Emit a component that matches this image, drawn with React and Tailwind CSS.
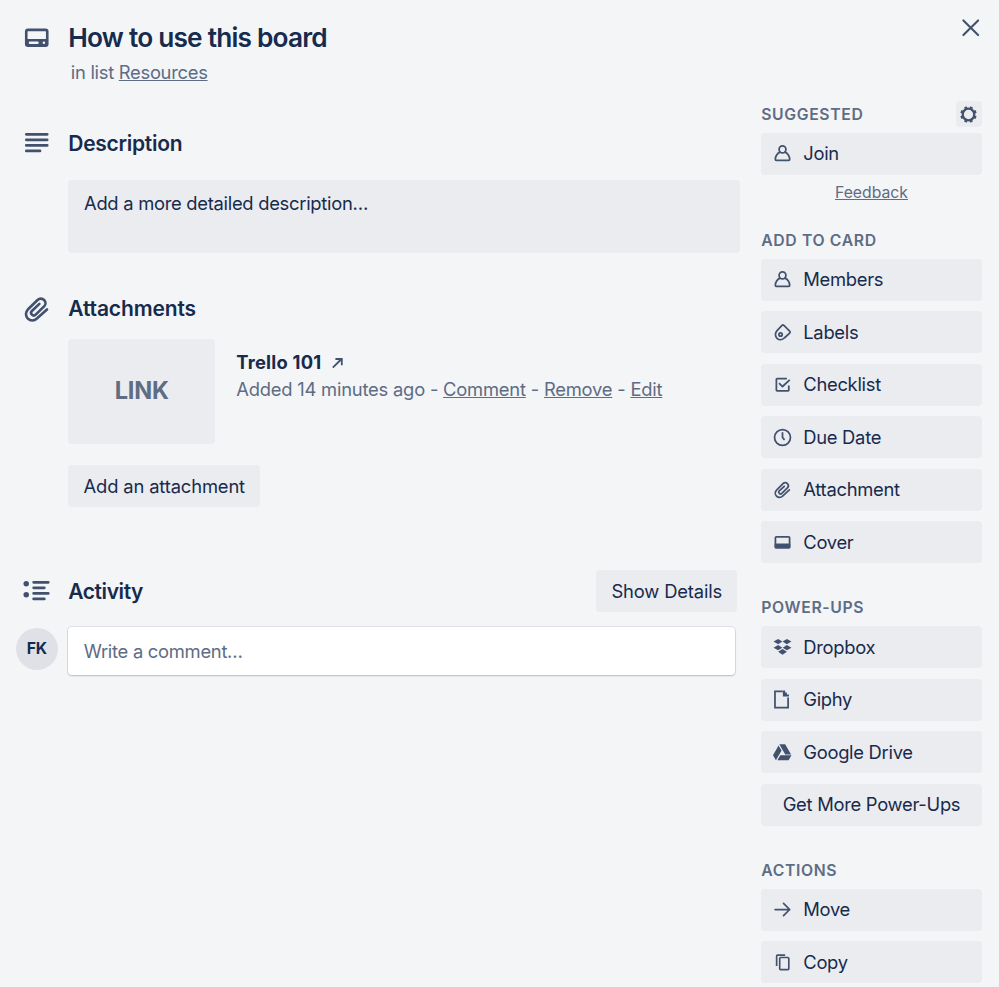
import { FaGoogleDrive } from "react-icons/fa";

const stroke = {
  fill: "none",
  stroke: "currentColor",
  strokeWidth: 2,
  strokeLinecap: "round",
  strokeLinejoin: "round",
};

function Icon({ size = 21, children, ...rest }) {
  return (
    <svg width={size} height={size} viewBox="0 0 24 24" className="shrink-0 text-[#42526e]" {...stroke} {...rest}>
      {children}
    </svg>
  );
}

const Person = () => (
  <Icon>
    <circle cx="12" cy="7.3" r="3.9" />
    <path d="M9.2 10.4C6.2 11.8 4 14.8 3.8 18.7c0 .7.4 1.1 1 1.1h14.4c.6 0 1-.4 1-1.1-.2-3.9-2.4-6.9-5.4-8.3" />
  </Icon>
);
const Tag = () => (
  <Icon>
    <path d="M11.4 3.9a1.6 1.6 0 0 1 2.2 0l6.6 6.5a1.5 1.5 0 0 1 0 2.2L14.4 18C11.8 20.6 8.2 20.9 5.8 18.7 3.3 16.3 3.3 12.4 5.8 9.8Z" />
    <circle cx="9.8" cy="14.2" r="1.9" />
  </Icon>
);
const Check = () => (
  <Icon strokeLinecap="butt">
    <path d="M17 5.2H5.8a.8.8 0 0 0-.8.8v12.4c0 .5.3.8.8.8h12.6c.5 0 .8-.3.8-.8v-5.2" />
    <path d="m8 10.3 4 4 8.3-7.7" />
  </Icon>
);
const Clock = () => (
  <Icon>
    <circle cx="12" cy="12" r="9.1" />
    <path d="M12 6.6V12l1.8 2.2" />
  </Icon>
);
const Clip = ({ size }) => (
  <Icon size={size}>
    <path d="m19.8 12.5-7.7 7c-2 1.9-5 1.9-6.9 0-1.9-1.9-1.9-4.9 0-6.9l7.4-7.3c1.4-1.4 3.6-1.4 5 0 1.4 1.4 1.4 3.5 0 4.9l-6.4 6.3c-.8.8-2.1.8-2.9 0-.8-.8-.8-2 0-2.8L14 8.3" />
  </Icon>
);
const Cover = () => (
  <Icon>
    <rect x="3.9" y="5.7" width="16.2" height="12.2" rx="1" />
    <path d="M4 14h16v3.8H4Z" fill="currentColor" />
  </Icon>
);
const Dropbox = () => (
  <Icon fill="currentColor" stroke="none">
    <path d="m7 2.2 4.9 3-4.9 3-5.2-3Zm10 0 5.2 3-5.2 3-4.9-3ZM7 9.2l4.8 3-4.8 3-5.2-3Zm10 0 5.2 3-5.2 3-4.8-3ZM12 13.8l5 3-5 3.4-5-3.4Z" />
  </Icon>
);
const Page = () => (
  <Icon strokeLinecap="butt" strokeLinejoin="miter">
    <path d="M12.2 2.7H3.4v18.7h15V9.8" />
    <path d="M12.4 1.8v6.8h7V6.3H17V4.1h-2V1.8Z" fill="currentColor" stroke="none" />
  </Icon>
);
const Drive = () => (
  <span className="flex w-[21px] shrink-0 justify-center text-[#42526e]">
    <FaGoogleDrive size={18.5} />
  </span>
);
const Arrow = () => (
  <Icon>
    <path d="M3.6 12h16.6M13.2 5l7 7-7 7" />
  </Icon>
);
const Copy = () => (
  <Icon strokeWidth="1.9">
    <rect x="8.8" y="6.3" width="10.4" height="13.8" rx="1" />
    <path d="M5.3 16V4.6c0-.6.4-1 1-1H15" strokeLinecap="butt" />
  </Icon>
);
const Gear = () => (
  <Icon strokeLinecap="butt" strokeWidth="2.6">
    <circle cx="12" cy="12" r="6.6" />
    {[22.5, 67.5, 112.5, 157.5, 202.5, 247.5, 292.5, 337.5].map((a) => (
      <path key={a} d="M12 2.6v3" strokeWidth="3.2" transform={`rotate(${a} 12 12)`} />
    ))}
  </Icon>
);

function Heading({ children, action }) {
  return (
    <div className="mb-[5.25px] flex h-[26.25px] items-center justify-between">
      <h3 className="pt-px text-[15.75px] font-semibold tracking-[0.04em] text-[#5e6c84]">{children}</h3>
      {action}
    </div>
  );
}

function SideButton({ icon: I, children }) {
  return (
    <button className="flex h-[42px] w-full items-center gap-[10.5px] rounded-[4px] bg-[#ebecf0] pl-[10.5px] text-left">
      <I />
      <span>{children}</span>
    </button>
  );
}

const Buttons = ({ children }) => <div className="flex flex-col gap-[10.5px]">{children}</div>;

const Section = ({ icon, children, className = "" }) => (
  <div className={`flex items-center ${className}`}>
    <div className="-mt-px flex w-[47.5px] shrink-0">{icon}</div>
    {children}
  </div>
);

export default function App() {
  return (
    <div className="flex h-[987px] w-[999px] overflow-hidden bg-[#f4f5f7] font-['Inter','Liberation_Sans',sans-serif] text-[18.375px] leading-[26.25px] tracking-[-0.015em] text-[#172b4d]">
      <main className="w-[740.25px] shrink-0 pl-[20.75px]">
        <Section
          className="mt-[22px] h-[32px]"
          icon={
            <Icon size={31.5}>
              <rect x="4" y="6" width="16" height="12" rx="1.3" />
              <path d="M4 13.4h16v4.4H4Z" fill="currentColor" strokeWidth="1" />
              <path d="M6.8 15.8h5.8M17.4 15.8h.1" stroke="#f4f5f7" strokeWidth="1.8" />
            </Icon>
          }
        >
          <h1 className="pt-px text-[26.25px] font-semibold tracking-[-0.03em]">How to use this board</h1>
        </Section>
        <p className="mt-[5px] pl-[50px] text-[#5e6c84]">
          in list <span className="underline">Resources</span>
        </p>

        <Section
          className="mt-[42px] h-[32px]"
          icon={
            <Icon size={31.5}>
              <path d="M4 5.6h16M4 9.8h16M4 14h16M4 18.2h10.5" />
            </Icon>
          }
        >
          <h2 className="pt-[2px] text-[21px] font-semibold tracking-[-0.013em]">Description</h2>
        </Section>
        <div className="mt-[20.5px] ml-[47.5px] h-[73px] rounded-[4px] bg-[#ebecf0] px-[15.75px] pt-[10.5px]">
          Add a more detailed description…
        </div>

        <Section className="mt-[40px] h-[32px]" icon={<Clip size={31.5} />}>
          <h2 className="pt-px text-[21px] font-semibold tracking-[-0.006em]">Attachments</h2>
        </Section>
        <div className="mt-[14px] ml-[47.5px] flex">
          <div className="flex h-[105px] w-[147px] items-center justify-center rounded-[4px] bg-[#ebecf0] text-[23.6px] font-bold tracking-[-0.008em] text-[#5e6c84]">
            LINK
          </div>
          <div className="ml-[21px] pt-[10.5px]">
            <p className="flex items-center gap-[10px] font-bold tracking-[0.012em]">
              Trello 101
              <svg width="14" height="14" viewBox="0 0 14 14" fill="none" stroke="#42526e" strokeWidth="1.8" className="mt-[2px]">
                <path d="M1.8 11.7 10 3.5M4.4 3h6.4v6.2" />
              </svg>
            </p>
            <p className="whitespace-nowrap text-[#5e6c84] tracking-[-0.0115em]">
              Added 14 minutes ago - <span className="underline">Comment</span> -{" "}
              <span className="underline">Remove</span> - <span className="underline">Edit</span>
            </p>
          </div>
        </div>
        <button className="mt-[21px] ml-[47.5px] flex h-[42px] w-[192px] items-center justify-center rounded-[4px] bg-[#ebecf0] tracking-[-0.008em] whitespace-nowrap">
          Add an attachment
        </button>

        <Section
          className="mt-[63px] h-[42px]"
          icon={
            <Icon size={31.5}>
              <path d="M9.6 5.6h11.2M9.6 9.8h8.2M9.6 14h11.2M9.6 18.2h8.2" />
              <g fill="currentColor" stroke="none">
                <circle cx="4" cy="6.7" r="2.1" />
                <circle cx="4" cy="15" r="2.1" />
              </g>
            </Icon>
          }
        >
          <h2 className="pt-[2px] text-[21px] font-semibold tracking-[-0.02em]">Activity</h2>
          <button className="mr-[3px] ml-auto flex h-[42px] w-[141px] items-center justify-center rounded-[4px] bg-[#ebecf0] tracking-[-0.008em]">
            Show Details
          </button>
        </Section>
        <div className="mt-[15px] -ml-[5px] flex">
          <div className="mt-px flex size-[42px] shrink-0 items-center justify-center rounded-full bg-[#dfe1e6] text-[15.75px] font-bold">
            FK
          </div>
          <div className="ml-[10px] flex h-[48px] w-[667.5px] items-center rounded-[4px] bg-white pl-[16px] text-[#5e6c84] shadow-[0_1px_2px_rgba(9,30,66,0.2),0_0_0_1px_rgba(9,30,66,0.08)]">
            Write a comment…
          </div>
        </div>
      </main>

      <aside className="ml-[21px] w-[220.5px] shrink-0">
        <div className="-mr-[5px] flex h-[101px] justify-end pt-[12px]">
          <Icon size={31.5} strokeWidth="1.6">
            <path d="m6.4 6.4 11.2 11.2M17.6 6.4 6.4 17.6" />
          </Icon>
        </div>
        <Heading
          action={
            <div className="flex size-[26.25px] items-center justify-center rounded-[4px] bg-[#ebecf0]">
              <Gear />
            </div>
          }
        >
          SUGGESTED
        </Heading>
        <SideButton icon={Person}>Join</SideButton>
        <div className="flex h-[52.5px] justify-center pt-[5px] text-[15.75px] tracking-normal text-[#5e6c84]">
          <span className="underline">Feedback</span>
        </div>

        <Heading>ADD TO CARD</Heading>
        <Buttons>
          <SideButton icon={Person}>Members</SideButton>
          <SideButton icon={Tag}>Labels</SideButton>
          <SideButton icon={Check}>Checklist</SideButton>
          <SideButton icon={Clock}>Due Date</SideButton>
          <SideButton icon={Clip}>Attachment</SideButton>
          <SideButton icon={Cover}>Cover</SideButton>
        </Buttons>

        <div className="h-[31.5px]" />
        <Heading>POWER-UPS</Heading>
        <Buttons>
          <SideButton icon={Dropbox}>Dropbox</SideButton>
          <SideButton icon={Page}>Giphy</SideButton>
          <SideButton icon={Drive}>Google Drive</SideButton>
          <button className="flex h-[42px] w-full items-center justify-center rounded-[4px] bg-[#ebecf0]">
            Get More Power-Ups
          </button>
        </Buttons>

        <div className="h-[31.5px]" />
        <Heading>ACTIONS</Heading>
        <Buttons>
          <SideButton icon={Arrow}>Move</SideButton>
          <SideButton icon={Copy}>Copy</SideButton>
        </Buttons>
      </aside>
    </div>
  );
}
